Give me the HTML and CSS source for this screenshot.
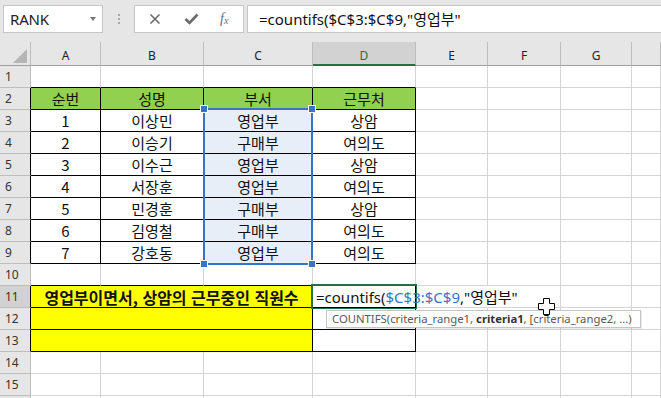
FILE: index.html
```html
<!DOCTYPE html>
<html lang="ko">
<head>
  <meta charset="UTF-8" />
  <title>COUNTIFS</title>
  <link rel="stylesheet" href="styles.css">
</head>
<body>
  <div class="app">
    <div class="topbar">
      <div class="namebox">
        <span class="name">RANK</span>
        <span class="caret"></span>
      </div>
      <div class="grip"><i></i><i></i><i></i></div>
      <div class="fxbtns">
        <svg class="ico" width="12" height="12" viewBox="0 0 12 12"><path d="M1.5 1.5 L10.5 10.5 M10.5 1.5 L1.5 10.5" stroke="#6b6b6b" stroke-width="1.6" fill="none"/></svg>
        <svg class="ico" width="15" height="12" viewBox="0 0 15 12"><path d="M1.5 6 L5.5 10 L13.5 1.5" stroke="#6b6b6b" stroke-width="2.6" fill="none"/></svg>
        <span class="fx">f<sub>x</sub></span>
      </div>
      <div class="formula">=countifs($C$3:$C$9,"영업부"</div>
    </div>

    <div class="sheet">
      <div class="grid">
        <div class="ch corner"><span class="tri"></span></div>
        <div class="ch">A</div><div class="ch">B</div><div class="ch">C</div><div class="ch on">D</div>
        <div class="ch">E</div><div class="ch">F</div><div class="ch">G</div><div class="ch"></div>

        <div class="rh">1</div>
        <div class="c kb"></div><div class="c kb"></div><div class="c kb"></div><div class="c kb"></div>
        <div class="c"></div><div class="c"></div><div class="c"></div><div class="c"></div>

        <div class="rh k">2</div>
        <div class="c k hd">순번</div><div class="c k hd">성명</div><div class="c k hd">부서</div><div class="c k hd">근무처</div>
        <div class="c"></div><div class="c"></div><div class="c"></div><div class="c"></div>

        <div class="rh k">3</div>
        <div class="c k">1</div><div class="c k">이상민</div><div class="c k sel">영업부</div><div class="c k">상암</div>
        <div class="c"></div><div class="c"></div><div class="c"></div><div class="c"></div>

        <div class="rh k">4</div>
        <div class="c k">2</div><div class="c k">이승기</div><div class="c k sel">구매부</div><div class="c k">여의도</div>
        <div class="c"></div><div class="c"></div><div class="c"></div><div class="c"></div>

        <div class="rh k">5</div>
        <div class="c k">3</div><div class="c k">이수근</div><div class="c k sel">영업부</div><div class="c k">상암</div>
        <div class="c"></div><div class="c"></div><div class="c"></div><div class="c"></div>

        <div class="rh k">6</div>
        <div class="c k">4</div><div class="c k">서장훈</div><div class="c k sel">영업부</div><div class="c k">여의도</div>
        <div class="c"></div><div class="c"></div><div class="c"></div><div class="c"></div>

        <div class="rh k">7</div>
        <div class="c k">5</div><div class="c k">민경훈</div><div class="c k sel">구매부</div><div class="c k">상암</div>
        <div class="c"></div><div class="c"></div><div class="c"></div><div class="c"></div>

        <div class="rh k">8</div>
        <div class="c k">6</div><div class="c k">김영철</div><div class="c k sel">구매부</div><div class="c k">여의도</div>
        <div class="c"></div><div class="c"></div><div class="c"></div><div class="c"></div>

        <div class="rh k">9</div>
        <div class="c k">7</div><div class="c k">강호동</div><div class="c k sel">영업부</div><div class="c k">여의도</div>
        <div class="c"></div><div class="c"></div><div class="c"></div><div class="c"></div>

        <div class="rh">10</div>
        <div class="c kb"></div><div class="c kb"></div><div class="c kb"></div><div class="c kb"></div>
        <div class="c"></div><div class="c"></div><div class="c"></div><div class="c"></div>

        <div class="rh k on">11</div>
        <div class="c k y span3 bold">영업부이면서, 상암의 근무중인 직원수</div>
        <div class="c k edit">=countifs(<span class="ref">$C$3:$C$9</span>,"영업부"</div>
        <div class="c nr"></div><div class="c"></div><div class="c"></div><div class="c"></div>

        <div class="rh k">12</div>
        <div class="c k y span3"></div><div class="c k"></div>
        <div class="c"></div><div class="c"></div><div class="c"></div><div class="c"></div>

        <div class="rh k">13</div>
        <div class="c k y span3"></div><div class="c k"></div>
        <div class="c"></div><div class="c"></div><div class="c"></div><div class="c"></div>

        <div class="rh">14</div>
        <div class="c"></div><div class="c"></div><div class="c"></div><div class="c"></div>
        <div class="c"></div><div class="c"></div><div class="c"></div><div class="c"></div>

        <div class="rh">15</div>
        <div class="c"></div><div class="c"></div><div class="c"></div><div class="c"></div>
        <div class="c"></div><div class="c"></div><div class="c"></div><div class="c"></div>

        <div class="rh"></div>
        <div class="c"></div><div class="c"></div><div class="c"></div><div class="c"></div>
        <div class="c"></div><div class="c"></div><div class="c"></div><div class="c"></div>
      </div>

      <!-- range highlight C3:C9 -->
      <div class="range">
        <span class="hdl tl"></span><span class="hdl tr"></span>
        <span class="hdl bl"></span><span class="hdl br"></span>
      </div>
      <!-- active cell D11 -->
      <div class="active"></div>
      <div class="tip">COUNTIFS(criteria_range1, <b>criteria1</b>, [criteria_range2, ...)</div>
      <svg class="cursor" width="17" height="18" viewBox="0 0 17 18">
        <path d="M5.5 0.5 H11.5 V5.5 H16.5 V11.5 H11.5 V16.5 H5.5 V11.5 H0.5 V5.5 H5.5 Z" fill="#fff" stroke="#000" stroke-width="1"/>
        <path d="M6.5 17.5 H10.5" stroke="#000" stroke-width="1"/>
      </svg>
    </div>
  </div>
</body>
</html>
```

FILE: styles.css
```css
:root {
  --top: #e6e6e6;
  --grid: #d4d4d4;
  --head-line: #bdbdbd;
  --green: #217346;
  --blue: #3a72c8;
  --font-ui: "Noto Sans", "Noto Sans CJK KR", sans-serif;
  --font-cell: "Noto Sans CJK KR", "Noto Sans", sans-serif;
}

body, html {
  margin: 0;
  padding: 0;
  background: #fff;
}

.app {
  width: 661px;
  height: 398px;
  overflow: hidden;
  font-family: var(--font-ui);
}

/* formula bar */
.topbar {
  height: 42px;
  background: var(--top);
  display: flex;
  align-items: flex-start;
  padding-top: 5px;
  box-sizing: border-box;
}

.namebox {
  margin-left: 3px;
  width: 100px;
  height: 28px;
  box-sizing: border-box;
  background: #fff;
  border: 1px solid #c6c6c6;
  display: flex;
  align-items: center;
  justify-content: space-between;
  padding: 0 6px 0 6px;
}

.name {
  font-size: 15px;
  color: #222;
  letter-spacing: -0.2px;
}

.caret {
  width: 0;
  height: 0;
  border-left: 3.5px solid transparent;
  border-right: 3.5px solid transparent;
  border-top: 4px solid #777;
}

.grip {
  width: 31px;
  height: 28px;
  display: flex;
  flex-direction: column;
  align-items: center;
  justify-content: center;
  gap: 2px;
}

.grip i {
  width: 2px;
  height: 2px;
  background: #a8a8a8;
}

.fxbtns {
  width: 110px;
  height: 28px;
  box-sizing: border-box;
  background: #fff;
  border: 1px solid #c6c6c6;
  display: flex;
  align-items: center;
  padding-left: 14px;
  gap: 23px;
}

.fx {
  font-family: "Liberation Serif", "DejaVu Serif", serif;
  font-style: italic;
  font-size: 14px;
  color: #6b6b6b;
  margin-left: -2px;
}

.fx sub {
  font-size: 10px;
  vertical-align: -1px;
}

.formula {
  margin-left: 3px;
  flex: 1;
  height: 28px;
  box-sizing: border-box;
  background: #fff;
  border: 1px solid #c6c6c6;
  border-right: none;
  padding-left: 11px;
  font-size: 15px;
  line-height: 26px;
  color: #111;
  white-space: nowrap;
}

/* sheet */
.sheet {
  position: relative;
}

.grid {
  display: grid;
  grid-template-columns: 31px 70px 103px 109px 103px 72px 73px 71px 29px;
  grid-template-rows: 24px;
  grid-auto-rows: 22px;
}

.ch {
  background: var(--top);
  border-right: 1px solid var(--head-line);
  border-bottom: 1px solid #9f9f9f;
  box-sizing: border-box;
  font-size: 12px;
  color: #222;
  display: flex;
  align-items: center;
  justify-content: center;
  padding-top: 3px;
}

.ch.on {
  background: #d2d2d2;
  color: var(--green);
  border-bottom: 2px solid var(--green);
  padding-top: 4px;
}

.corner {
  position: relative;
}

.tri {
  position: absolute;
  left: 13px;
  top: 7px;
  width: 0;
  height: 0;
  border-left: 14px solid transparent;
  border-bottom: 14px solid #b5b5b5;
}

.rh {
  background: var(--top);
  border-right: 1px solid var(--head-line);
  border-bottom: 1px solid var(--head-line);
  box-sizing: border-box;
  font-size: 12px;
  color: #333;
  display: flex;
  align-items: center;
  padding-left: 5px;
}

.rh.k {
  border-right-color: #000;
}

.rh.on {
  background: #d2d2d2;
}

.c {
  border-right: 1px solid var(--grid);
  border-bottom: 1px solid var(--grid);
  box-sizing: border-box;
  font-family: var(--font-cell);
  font-size: 15px;
  color: #111;
  display: flex;
  align-items: center;
  justify-content: center;
  white-space: nowrap;
}

.c.k {
  border-right-color: #000;
  border-bottom-color: #000;
}

.c.kb {
  border-bottom-color: #000;
}

.c.nr {
  border-right-color: transparent;
}

.hd {
  background: #92d050;
}

.sel {
  background: #e7eef8;
}

.y {
  background: #ffff00;
}

.span3 {
  grid-column: span 3;
}

.bold {
  font-weight: bold;
  font-size: 16px;
}

.edit {
  justify-content: flex-start;
  padding-left: 3px;
  overflow: visible;
  font-family: var(--font-ui);
  position: relative;
  z-index: 1;
}

.ref {
  color: #3a72c8;
}

/* overlays */
.range {
  position: absolute;
  left: 203px;
  top: 66px;
  width: 110px;
  height: 157px;
  border: 2px solid var(--blue);
  box-sizing: border-box;
}

.hdl {
  position: absolute;
  width: 6px;
  height: 6px;
  background: var(--blue);
  outline: 1px solid #fff;
}

.hdl.tl { left: -4px; top: -4px; }
.hdl.tr { right: -4px; top: -4px; }
.hdl.bl { left: -4px; bottom: -4px; }
.hdl.br { right: -4px; bottom: -4px; }

.active {
  position: absolute;
  left: 311px;
  top: 242px;
  width: 106px;
  height: 25px;
  border: 2px solid var(--green);
  box-sizing: border-box;
}

.tip {
  position: absolute;
  left: 326px;
  top: 268px;
  width: 315px;
  height: 18px;
  box-sizing: border-box;
  background: #fff;
  border: 1px solid #c4c4c4;
  box-shadow: 1px 1px 1px rgba(0, 0, 0, 0.08);
  font-size: 11.3px;
  line-height: 16px;
  color: #5a5a5a;
  padding-left: 5px;
  white-space: nowrap;
  z-index: 2;
}

.tip b {
  color: #333;
}

.cursor {
  position: absolute;
  left: 538px;
  top: 256px;
  z-index: 3;
}
```
